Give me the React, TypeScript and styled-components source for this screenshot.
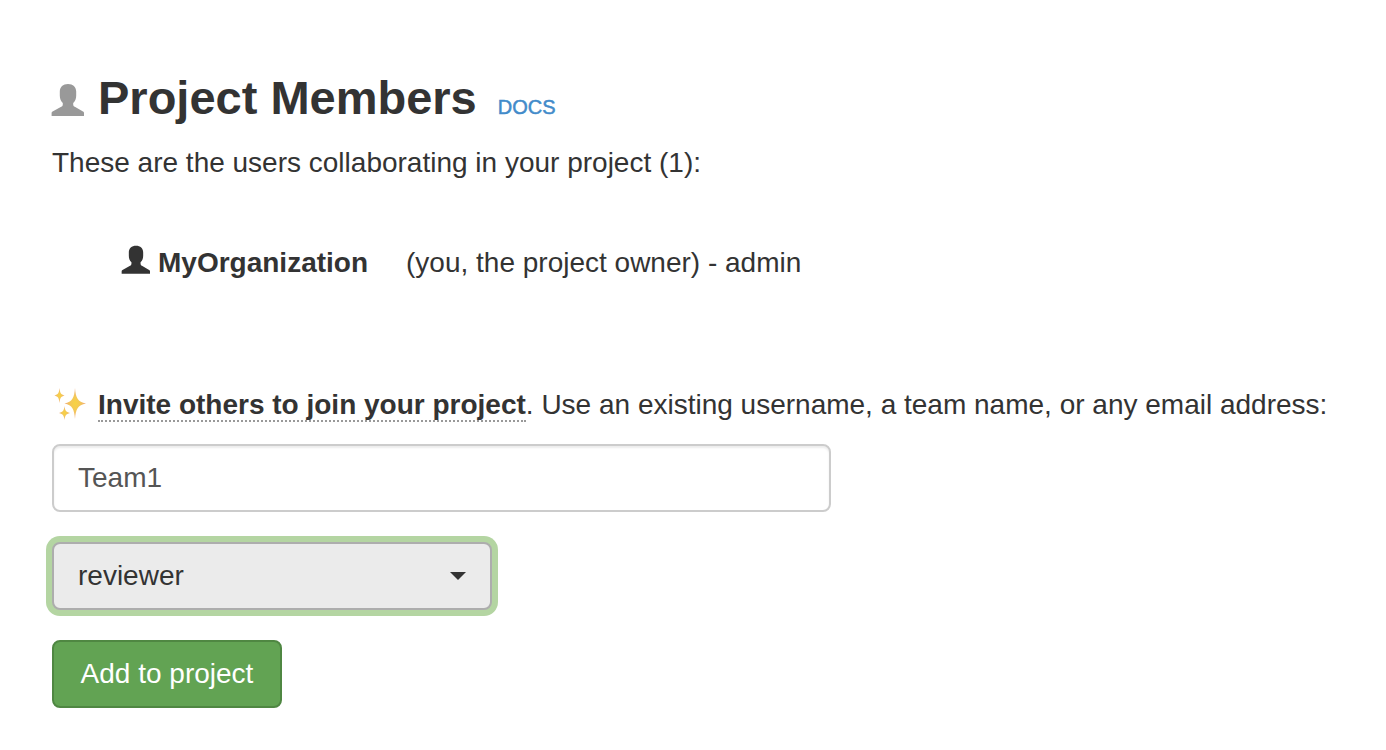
import React, { useState } from "react";
import styled, { createGlobalStyle } from "styled-components";

const GlobalStyle = createGlobalStyle`
  *, *::before, *::after { box-sizing: border-box; }
  body {
    margin: 0;
    background: #fff;
    color: #333;
    font-family: "Liberation Sans", Arial, sans-serif;
    font-size: 28px;
    line-height: 40px;
  }
  button, input, select { font: inherit; }
`;

const Page = styled.main`
  padding: 68px 52px 42px;
`;

const Header = styled.header`
  display: flex;
  align-items: baseline;
  gap: 14px;
  margin-bottom: 15px;
`;

const Title = styled.h1`
  margin: 0;
  font-size: 47px;
  line-height: 60px;
  font-weight: 700;
`;

const DocsLink = styled.a`
  margin-left: 7px;
  color: #428bca;
  font-size: 20px;
  line-height: 28px;
  text-decoration: none;
  -webkit-text-stroke: 0.5px currentColor;
`;

const Text = styled.p`
  margin: 0;
`;

const MemberList = styled.ul`
  margin: 60px 0 0;
  padding: 0 0 0 70px;
  list-style: none;
`;

const Member = styled.li`
  display: flex;
  align-items: baseline;
`;

const MemberName = styled.strong`
  margin: 0 38px 0 8px;
`;

const InviteForm = styled.form`
  display: flex;
  flex-direction: column;
  align-items: flex-start;
  margin-top: 102px;
`;

const InviteLabel = styled.label`
  display: flex;
  align-items: baseline;
  margin-bottom: 19px;
`;

const InviteTerm = styled.strong`
  margin-left: 12px;
  line-height: 30px;
  border-bottom: 2px dotted #999;
`;

const PersonSvg = styled.svg<{ $size: number; $muted?: boolean }>`
  flex: none;
  width: ${(p) => p.$size}px;
  height: ${(p) => p.$size}px;
  overflow: visible;
  fill: ${(p) => (p.$muted ? "#999" : "#333")};
`;

const SparklesSvg = styled.svg`
  flex: none;
  align-self: center;
  width: 34px;
  height: 34px;
`;

const MemberInput = styled.input`
  width: 100%;
  max-width: 779px;
  height: 68px;
  margin-bottom: 30px;
  padding: 12px 24px;
  border: 2px solid #ccc;
  border-radius: 8px;
  background: #fff;
  color: #555;
  box-shadow: inset 0 2px 2px rgba(0, 0, 0, 0.075);
  outline: none;
`;

const SelectBox = styled.div`
  position: relative;
  width: 100%;
  max-width: 440px;
  margin-bottom: 30px;
`;

const RoleSelect = styled.select`
  display: block;
  width: 100%;
  height: 68px;
  padding: 12px 56px 12px 24px;
  border: 2px solid #adadad;
  border-radius: 8px;
  background: #ebebeb;
  color: #333;
  appearance: none;
  outline: none;
  box-shadow: 0 0 0 6px #b4d5a2;
`;

const Caret = styled.svg`
  position: absolute;
  top: 30px;
  right: 26px;
  width: 16px;
  height: 8px;
  fill: #333;
  pointer-events: none;
`;

const SubmitButton = styled.button`
  min-width: 230px;
  height: 68px;
  padding: 12px 24px;
  border: 2px solid #4f8742;
  border-radius: 8px;
  background: #62a353;
  color: #fff;
  cursor: pointer;
`;

// The figure hangs slightly below the text baseline, hence the shifted viewBox.
function PersonIcon({ size, muted }: { size: number; muted?: boolean }) {
  return (
    <PersonSvg $size={size} $muted={muted} viewBox="0 -2 32 32" aria-hidden="true">
      <path d="M16 0C21 0 24.2 3 24.2 7.6V11.5C24.2 14.6 23.2 17 21.2 18.9V20.2C21.2 21.6 21.8 22.3 22.8 22.8L31 27.6Q32 28.1 32 29V32H-0.4V29Q-0.4 28.1 0.6 27.6L9.2 22.8C10.2 22.3 10.8 21.6 10.8 20.2V18.9C8.8 17 7.8 14.6 7.8 11.5V7.6C7.8 3 11 0 16 0Z" />
    </PersonSvg>
  );
}

function SparklesIcon() {
  return (
    <SparklesSvg viewBox="0 0 34 34" aria-hidden="true">
      <defs>
        <radialGradient id="gold">
          <stop offset="0" stopColor="#f7d343" />
          <stop offset="0.5" stopColor="#f3c659" />
          <stop offset="1" stopColor="#eda77c" />
        </radialGradient>
      </defs>
      <g fill="url(#gold)">
        <path d="M23 0C23.8 10 25.6 13.8 34 15.5C25.6 17.4 23.8 21 23 31C22.2 21 20.4 17.4 12.5 15.5C20.4 13.8 22.2 10 23 0Z" />
        <path d="M7.5 0C8 4.6 8.8 6.6 12.5 7.5C8.8 8.4 8 10.4 7.5 15C7 10.4 6.2 8.4 2.5 7.5C6.2 6.6 7 4.6 7.5 0Z" />
        <path d="M12.5 18C13 22.2 13.8 24.1 18 25C13.8 25.9 13 27.8 12.5 32C12 27.8 11.2 25.9 7 25C11.2 24.1 12 22.2 12.5 18Z" />
      </g>
    </SparklesSvg>
  );
}

export default function App() {
  const [member, setMember] = useState("Team1");
  const [role, setRole] = useState("reviewer");

  return (
    <>
      <GlobalStyle />
      <Page>
        <Header>
          <PersonIcon size={32} muted />
          <Title>Project Members</Title>
          <DocsLink href="#docs">DOCS</DocsLink>
        </Header>
        <Text>These are the users collaborating in your project (1):</Text>
        <MemberList>
          <Member>
            <PersonIcon size={28} />
            <MemberName>MyOrganization</MemberName>
            <span>(you, the project owner) - admin</span>
          </Member>
        </MemberList>
        <InviteForm onSubmit={(e) => e.preventDefault()}>
          <InviteLabel htmlFor="member">
            <SparklesIcon />
            <InviteTerm>Invite others to join your project</InviteTerm>
            <span>. Use an existing username, a team name, or any email address:</span>
          </InviteLabel>
          <MemberInput id="member" type="text" value={member} onChange={(e) => setMember(e.target.value)} />
          <SelectBox>
            <RoleSelect aria-label="Role" value={role} onChange={(e) => setRole(e.target.value)}>
              <option value="reviewer">reviewer</option>
            </RoleSelect>
            <Caret viewBox="0 0 16 8" aria-hidden="true">
              <path d="M0 0H16L8 8Z" />
            </Caret>
          </SelectBox>
          <SubmitButton type="submit">Add to project</SubmitButton>
        </InviteForm>
      </Page>
    </>
  );
}
